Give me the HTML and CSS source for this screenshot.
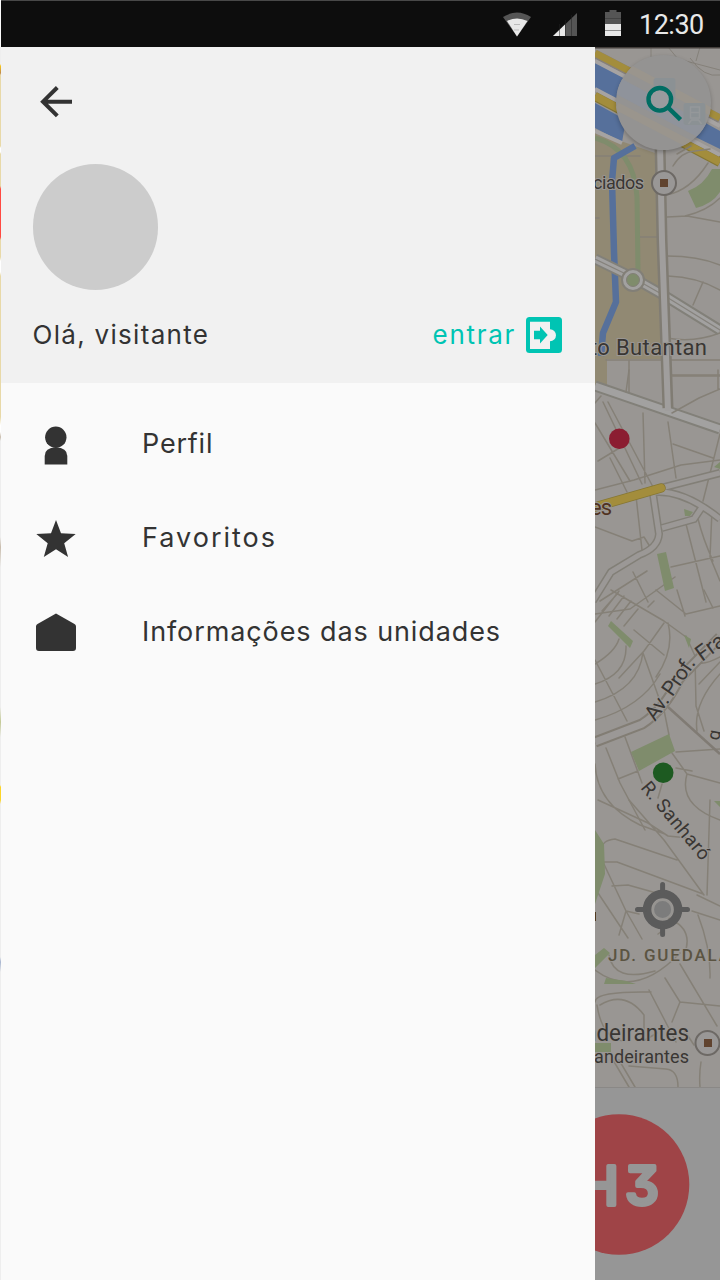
FILE: index.html
```
<!DOCTYPE html>
<html lang="pt-BR">
<head>
<meta charset="utf-8">
<title>Menu</title>
<link rel="stylesheet" href="styles.css">
</head>
<body>
<div class="screen">
  <header class="status">
    <svg class="status-icons" width="120" height="30" viewBox="501 9 120 30">
      <path fill="#555" d="M503 17Q517 8 531 17L517 36.500Z"/>
      <path fill="#e8e8e8" d="M507 21Q517 16 527.500 21L517 36.500Z"/>
      <path stroke="#bbb" d="M514 24.500h6M514 30h5"/>
      <path fill="#555" d="M577 13v23h-24Z"/>
      <path fill="#e8e8e8" d="M565 24.500V36h-12Z"/>
      <path stroke="#222" stroke-width=".5" d="M559.500 24v12M565.500 20v16M571.500 15v21"/>
      <path fill="#555" d="M605 12h4.500v-2h7v2h4.500v13h-16Z"/>
      <path fill="#e8e8e8" d="M605 24h16v12h-16Z"/>
      <path stroke="#333" stroke-width=".5" d="M605 18.500h16M605 30.500h16"/>
    </svg>
    <span class="clock">12:30</span>
  </header>
  <main class="content">
    <div class="edge"></div>
    <nav class="drawer">
      <section class="account">
        <svg class="back" width="34" height="34" viewBox="39 85 34 34" fill="none" stroke="#333" stroke-width="4"><path d="M57.300 87.500 43 101.700 57.300 115.900M43 101.700h29"/></svg>
        <div class="avatar"></div>
        <div class="greeting">
          <span class="hello">Olá, visitante</span>
          <a class="login"><span>entrar</span>
            <svg width="36" height="36" viewBox="0 0 36 36"><rect width="36" height="36" rx="3.500" fill="#00c4b3"/><path fill="#f1f1f1" d="M4 4.700h20v7.500a6 6 0 0 1 0 12v7.800H4Z"/><path fill="#00c4b3" d="M8 13.800h6V9.500l7.700 8.500-7.700 8.500v-4.300H8Z"/></svg>
          </a>
        </div>
      </section>
      <ul class="menu">
        <li class="profile"><svg width="42" height="42" viewBox="35 425 42 42" fill="#333"><circle cx="55.800" cy="437.300" r="10.700"/><path d="M44.700 464.500V456q0-8.500 11.200-8.500T67.300 456v8.500Z"/></svg><span>Perfil</span></li>
        <li class="favorites"><svg width="42" height="42" viewBox="35 519 42 42" fill="#333"><path d="M56 520l5 13.200 14.700.8-11.500 9.200 3.900 13.800L56 549.300 43.800 557l3.900-13.800L36.300 534l14.700-.8Z"/></svg><span>Favoritos</span></li>
        <li class="units"><svg width="42" height="42" viewBox="35 613 42 42" fill="#333"><path d="M56 613.500 74.500 624q1.500.8 1.500 2.500V648q0 3-3 3H39q-3 0-3-3V626.500q0-1.700 1.500-2.500Z"/></svg><span>Informações das unidades</span></li>
      </ul>
    </nav>
    <aside class="behind">
      <svg class="map" width="125" height="1041" viewBox="595 47 125 1041">
        <rect x="595" y="47" width="125" height="1041" fill="#999693"/>
        <!-- river, avenues and the park strip -->
        <path fill="#918973" d="M595 132 655 153 661 359H607V386H595Z"/>
        <path fill="#999693" d="M595 47h125v125L595 90Z"/>
        <path stroke="#85817a" d="M651 47v12M668 47l10 12 42 11M700 47l-4 14M690 58q14 20 30 17" fill="none"/>
        <path stroke="#86807a" stroke-width="9" d="M595 54 720 119"/>
        <path stroke="#a38d3c" stroke-width="7" d="M595 53 720 118"/>
        <path fill="#56709b" d="M595 62 720 131v18L595 88Z"/>
        <path stroke="#a6a3a2" stroke-width="4" d="M595 61 720 126"/>
        <path stroke="#857633" stroke-width="10" d="M595 96 720 162"/>
        <path stroke="#a38d3c" stroke-width="8" d="M595 96 720 162"/>
        <path fill="#56709b" d="M595 103 626 120 622 142 595 128Z"/>
        <path stroke="#a6a3a2" stroke-width="4" d="M595 89 720 155M595 131 622 143"/>
        <g fill="none" stroke-linecap="round" stroke="#858077" stroke-width="1.500">
          <path d="M666 195q24-4 42-32M667 217l20-1 33 6M685 216q22-5 35-18M667 256q31 0 53 9M668 276q29 1 52 14M703 282l-10 23M640 237h20M667 338q27 5 53-5M606 360h114M629 360v35M665 375h55M595 218h4M640 156h-45"/>
          <path d="M673 166q8-14 22-15l15-2M677 154l14-8"/>
        </g>
        <path stroke="#7f8c6c" stroke-width="5" fill="none" d="M595 138q39 11 42 59l1 74"/>
        <path stroke="#56709b" stroke-width="6.500" fill="none" stroke-linejoin="round" d="M635 146 614 158 612 181 614 252 616 302 603 333 601 356"/>
        <g fill="none" stroke="#828079" stroke-width="11"><path d="M595 259l35 17 35 20 55 34M595 386 720 429"/></g>
        <g fill="none" stroke="#a2a1a0" stroke-width="7"><path d="M595 259l35 17 35 20 55 34M595 386 720 429"/></g>
        <path stroke="#85827c" stroke-width="1.200" fill="none" d="M595 259l35 17 35 20 55 34"/>
        <path stroke="#807c73" fill="none" stroke-width="11" d="M660 144 662 240 668 408"/>
        <path stroke="#a09e9d" fill="none" stroke-width="6" d="M660 144 662 240 668 411"/>
        <circle cx="633" cy="280" r="11" fill="#a2a1a0" stroke="#827f77" stroke-width="2"/><circle cx="633" cy="280" r="6.500" fill="#7f8c6c" stroke="#827f77"/>
        <path fill="#7f8c6c" d="M688 191q16-6 24-22l8 0v23q-8 12-24 16Z"/>

        <!-- residential streets, middle -->
        <g fill="none" stroke="#858077" stroke-width="1.500" stroke-linecap="round" stroke-linejoin="round">
          <path d="M629 370l-3 22M672 376h48M718 370v20M672 413l27-15 21-9M643 413l2 70M668 422l8 56M673 444l40 14M720 434l-17 67M595 423l35 58M603 402l39 82M608 402l45 85M595 403l6-7M598 461l28-17M610 458l17 34M595 527l37 14 12-4M636 496l6 54M644 537l8 13M686 524l20 78M698 519q5 20 15 42M712 510l-2 47 10 24M671 567l49-11M633 572l15 30M600 601l47-30M595 614l35-5 45-32"/>
          <path d="M595 490l39-10 47-15 39-5"/>
        </g>
        <g fill="none" stroke="#827f77" stroke-width="8"><path d="M661 488 720 473M649 493q31-6 71 26M653 494l6 40q-1 14-20 21l-28 17-18 29M662 528l32-9 8-12"/></g>
        <g fill="none" stroke="#9b9896" stroke-width="5"><path d="M661 488 720 473M649 493q31-6 71 26M653 494l6 40q-1 14-20 21l-28 17-18 29M662 528l32-9 8-12"/></g>
        <path stroke="#857633" stroke-width="9.500" stroke-linecap="round" d="M595 507 661 488"/>
        <path stroke="#a38d3c" stroke-width="8" stroke-linecap="round" d="M595 507 661 488"/>
        <path fill="#7f8c6c" d="M657 554l9-2 8 36-9 3ZM684 509l9 3-3 4h-5ZM714 467l6-5v7Z"/>

        <!-- lower hillside streets -->
        <g fill="none" stroke="#858077" stroke-width="1.500" stroke-linecap="round" stroke-linejoin="round">
          <path d="M595 622l24-31M602 611l16-18M609 616l15-20M617 619l14-18M624 626l14-17M611 590l53 31 22 16M656 590l30 24 34-8M677 590l8 26M704 590l9 18M648 607l6-6M634 630l30 25M664 623l-20 28-25 27M595 664q20-12 24-25M595 684q32-10 31-38M595 702q44-13 48-50M595 720q46-13 65-46M595 660l32 61M643 653l17 48M668 623q7 27-12 54M686 636l9 20 1 50 8 25M696 661q5 6 24-4M720 674q-27 30-23 57M699 684l21-22M664 710l5 25M606 748l14 35 25 47M625 737l17 46M618 779l20-8M676 752l44-3M672 753l15 21 33 9M687 774q-9 31 33 46M676 768l16 3M662 784l-4 14"/>
          <path d="M595 764q2 40 45 61l25 9M598 800l50 23 20 13 20 2M629 800l35 40 40 55M603 848q-2-7 12-9l62 21M602 862h15l86 32M603 862l23 49 16 28M612 886l16-1 32 9M598 893l30 45M626 911l13 3M626 911l-7 24M697 895l23 11M692 911l28 9M698 915q13 34 12 63M710 800l-3 95M658 934q15-10 10-18M595 970q40 30 85-17M609 955q5 28 46 16M672 920q22 11 12 35M649 990l27 52M680 964l37 62M665 978l15 24-8 20M680 1002l40 4M595 1002q0-11 56-10M597 1005q5 33 26 36M600 1005q25-15 44 10v23M645 1040l12-7M613 1060l16 27M619 1060l16 27M629 1066l37 3q12 1 12 18M701 1062q-2 12-1 25M684 1030l10 15"/>
        </g>
        <path fill="none" stroke="#827d74" stroke-width="11" d="M595 742l47-18q22-14 37-45l41-42"/>
        <path fill="none" stroke="#9b9896" stroke-width="7" d="M595 742l47-18q22-14 37-45l41-42"/>
        <path stroke="#807b74" stroke-width="2.500" d="M668 707 720 754"/>
        <path fill="#7f8c6c" d="M611 621l22 20-3 7-22-22ZM684 635l7 4-2 9ZM631 752l38-18 6 17-36 20ZM595 830l9 14 1 30-10 30ZM595 955l9-7 6 5-15 15ZM606 978l20 3 10 3h-32ZM595 1043h16v9h-16ZM714 801h6v6Z"/>

        <g class="labels">
          <text x="593" y="189" font-size="18" textLength="51">ciados</text>
          <text x="590" y="355" font-size="22" textLength="117">to Butantan</text>
          <text x="590" y="515" font-size="22" fill="#50321f" textLength="22">es</text>
          <text transform="translate(655 722) rotate(-55)" font-size="21" textLength="72">Av. Prof.</text>
          <text transform="translate(702 662) rotate(-36)" font-size="22">Fra</text>
          <text transform="translate(719 741) rotate(-80)" font-size="18">g</text>
          <text transform="translate(640 788) rotate(50)" font-size="19" textLength="96">R. Sanharó</text>
          <text x="608" y="961" font-size="17" fill="#5b5442" class="district" textLength="122">JD. GUEDALA</text>
          <text x="584" y="1041" font-size="23" textLength="105" lengthAdjust="spacingAndGlyphs">ndeirantes</text>
          <text x="594" y="1063" font-size="18" textLength="95">andeirantes</text>
          <path stroke="#50391f" stroke-width="1" d="M595.500 912v9"/>
        </g>
        <g fill="#999796" stroke="#6d6965" stroke-width="2"><circle cx="664" cy="183" r="12"/><circle cx="707.500" cy="1043" r="12"/></g>
        <path fill="#60432f" d="M660 179h8v8h-8ZM704 1039h8v8h-8Z"/>
        <circle cx="619.300" cy="438.800" r="10.300" fill="#8b1d31"/>
        <circle cx="663.200" cy="772.800" r="10.300" fill="#1d5a21"/>
        <g fill="none" stroke="#5b5b5b" stroke-linecap="round"><circle cx="662.600" cy="909.500" r="15.500" stroke-width="8.500"/><path stroke-width="5" d="M662.600 884.500v7M662.600 927v7.500M637.500 909.500h7M680 909.500h7.500"/></g>
        <circle cx="662.600" cy="909.500" r="9.500" fill="#7c7c7c" stroke="#969491" stroke-width="2"/>
        <path stroke="#8a8886" d="M595 1087.500h125"/><path stroke="#443f3c" stroke-width="1.500" d="M595 47.700h125"/>
      </svg>
      <button class="search" aria-label="Buscar">
        <svg width="95" height="95" viewBox="615.500 55 95 95">
          <path stroke="#9a958d" stroke-width="8" d="M616 62l95 50M616 106l90 47"/>
          <path stroke="#8f939b" stroke-width="16" d="M610 82l102 54"/>
          <g fill="#8b9194"><rect x="653" y="78" width="22" height="22" rx="3"/><rect x="683" y="103" width="22" height="22" rx="3"/></g>
          <g fill="none" stroke="#95989a" stroke-width="1.500"><rect x="690" y="107" width="9" height="11"/><path d="M690 112.500h9M688 124l3-4h7l3 4"/></g>
          <circle cx="659.300" cy="99.300" r="11.300" fill="#989b9e" stroke="#006d63" stroke-width="4.400"/><path stroke="#006d63" stroke-width="4.500" d="M667 107 680 119.700"/>
        </svg>
      </button>
      <div class="panel">
        <svg width="125" height="192" viewBox="595 1088 125 192">
          <circle cx="619" cy="1184.500" r="70.300" fill="#9f4447"/>
          <text class="line-name" x="578.500" y="1205">H</text><text class="line-name" x="625" y="1205">3</text>
        </svg>
      </div>
    </aside>
  </main>
</div>
</body>
</html>
```
FILE: styles.css
```
* { box-sizing: border-box; }
body { margin: 0; background: #fafafa; font-family: Inter, "Liberation Sans", sans-serif; color: #333; }
.screen { width: 720px; height: 1280px; display: flex; flex-direction: column; overflow: hidden; }
.status { height: 47px; margin-left: 1px; background: #0d0d0d; border-top: 1px solid #484848; display: flex; align-items: center; justify-content: flex-end; gap: 18px; padding-right: 16px; }
.status-icons { display: block; }
.clock { font: 27px/46px Roboto, sans-serif; color: #e8e8e8; width: 65px; white-space: nowrap; letter-spacing: -.5px; padding-top: 2px; }
.content { flex: 1; display: flex; }
.edge { width: 1px; background: linear-gradient(#eee 17px, #f6c61c 19px, #c18a4a 26px, #e8d9a8 28px 99px, #fff 101px 105px, #e8d9a8 107px 139px, #ff4a42 142px 190px, #e8d9a8 193px 210px, #fff 214px 225px, #e8d9a8 229px 370px, #fff 378px 385px, #c9bdad 390px, #eee 394px 490px, #c9bdad 500px, #eee 520px 660px, #c4ca96 675px, #eee 690px 738px, #fcd528 740px 753px, #eee 757px 910px, #a8b6d0 915px, #eee 925px); }
.drawer { width: 594px; background: #fafafa; }
.account { height: 336px; background: #f1f1f1; padding: 38px 33px 0 31.5px; display: flex; flex-direction: column; }
.back { margin-left: 6.5px; flex: none; }
.avatar { width: 125.5px; height: 125.5px; border-radius: 50%; background: #ccc; margin: 45px 0 27.5px; flex: none; }
.greeting { display: flex; align-items: center; justify-content: space-between; height: 36px; font-size: 26px; line-height: 36px; }
.hello { letter-spacing: 1.3px; }
.login { display: flex; align-items: center; gap: 10px; color: #00c4b3; letter-spacing: 1.7px; }
.menu { list-style: none; margin: 0; padding: 16px 0 0 34px; }
.menu li { height: 94px; display: flex; align-items: center; gap: 65px; font-size: 27px; white-space: nowrap; }
.menu .profile { letter-spacing: .8px; }
.menu .favorites { letter-spacing: 2px; }
.menu .units { letter-spacing: .9px; }
.menu svg, .login svg { display: block; flex: none; }
.menu span { transform: translateY(-3px); }
.behind { width: 125px; position: relative; background: #969696; }
.map, .panel svg, .search svg { display: block; }
.search { position: absolute; left: 20.5px; top: 8px; width: 95px; height: 95px; border: 0; padding: 0; border-radius: 50%; background: #949392; overflow: hidden; box-shadow: 0 2px 4px rgba(0,0,0,.25); }
.labels { font-family: Roboto, sans-serif; fill: #393633; paint-order: stroke; stroke: #999693; stroke-width: 2px; }
.district { font-weight: 500; }
.line-name { font: 500 54px Inter, sans-serif; font-feature-settings: "cv09"; fill: #969696; stroke: #969696; stroke-width: 4px; stroke-linejoin: round; }
```
